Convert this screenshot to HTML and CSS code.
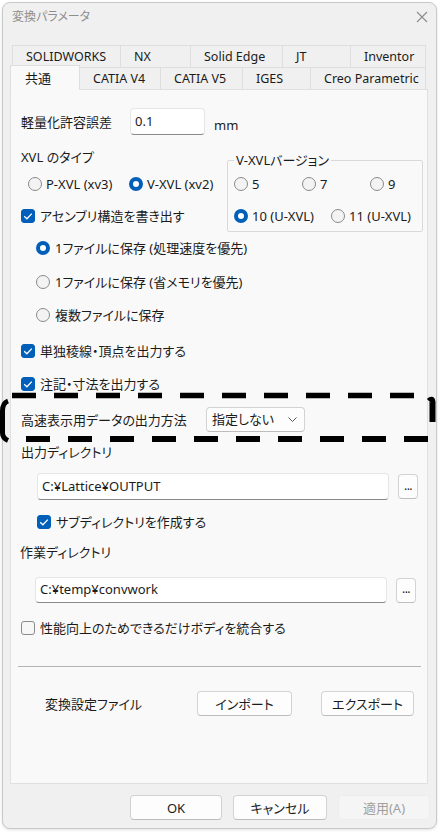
FILE: index.html
```html
<!DOCTYPE html>
<html lang="ja">
<head>
<meta charset="utf-8">
<link rel="stylesheet" href="styles.css">
</head>
<body>
<div class="window">
  <div class="titlebar">
    <span class="title">変換パラメータ</span>
    <svg class="close" viewBox="0 0 12 12"><path d="M1 1 L11 11 M11 1 L1 11" stroke="#8c8c8c" stroke-width="1.1" fill="none"/></svg>
  </div>
  <div class="tabs">
    <div class="tabrow back">
      <div class="tab w108">SOLIDWORKS</div>
      <div class="tab w70">NX</div>
      <div class="tab w92">Solid Edge</div>
      <div class="tab w68">JT</div>
      <div class="tab w76 last">Inventor</div>
    </div>
    <div class="tabrow front">
      <div class="tab w70 active">共通</div>
      <div class="tab w80">CATIA V4</div>
      <div class="tab w82">CATIA V5</div>
      <div class="tab w68">IGES</div>
      <div class="tab w116 last">Creo Parametric</div>
    </div>
  </div>
  <div class="panel">
    <div class="row r-tol">
      <span class="lbl-tol">軽量化許容誤差</span>
      <div class="tb tol"><span>0.1</span></div>
      <span class="unit">mm</span>
    </div>

    <div class="xvl">
      <div class="xvl-left">
        <div class="row h20">XVL のタイプ</div>
        <div class="row h20 types">
          <label class="opt-item w101"><span class="rd"></span><span>P-XVL (xv3)</span></label>
          <label class="opt-item"><span class="rd on"></span><span>V-XVL (xv2)</span></label>
        </div>
        <div class="row h20 mt12">
          <label class="chk"><span class="cb on"><svg viewBox="0 0 14 14"><path d="M3.2 7.2 L5.9 9.8 L10.8 4.6" stroke="#fff" stroke-width="1.3" fill="none"/></svg></span><span>アセンブリ構造を書き出す</span></label>
        </div>
      </div>
      <fieldset class="ver">
        <legend>V-XVLバージョン</legend>
        <div class="vgrid">
          <label class="opt-item"><span class="rd"></span><span>5</span></label>
          <label class="opt-item"><span class="rd"></span><span>7</span></label>
          <label class="opt-item"><span class="rd"></span><span>9</span></label>
        </div>
        <div class="vrow2">
          <label class="opt-item w97"><span class="rd on"></span><span>10 (U-XVL)</span></label>
          <label class="opt-item"><span class="rd"></span><span>11 (U-XVL)</span></label>
        </div>
      </fieldset>
    </div>

    <div class="row h20 indent mt6">
      <label class="opt-item g5"><span class="rd on"></span><span>1ファイルに保存 (処理速度を優先)</span></label>
    </div>
    <div class="row h20 indent mt14">
      <label class="opt-item g5"><span class="rd"></span><span>1ファイルに保存 (省メモリを優先)</span></label>
    </div>
    <div class="row h20 indent mt13">
      <label class="opt-item g5"><span class="rd"></span><span>複数ファイルに保存</span></label>
    </div>

    <div class="row h20 mt16">
      <label class="chk"><span class="cb on"><svg viewBox="0 0 14 14"><path d="M3.2 7.2 L5.9 9.8 L10.8 4.6" stroke="#fff" stroke-width="1.3" fill="none"/></svg></span><span>単独稜線・頂点を出力する</span></label>
    </div>
    <div class="row h20 mt13">
      <label class="chk"><span class="cb on"><svg viewBox="0 0 14 14"><path d="M3.2 7.2 L5.9 9.8 L10.8 4.6" stroke="#fff" stroke-width="1.3" fill="none"/></svg></span><span>注記・寸法を出力する</span></label>
    </div>

    <div class="row r-sel">
      <span class="lbl-sel">高速表示用データの出力方法</span>
      <div class="select"><span>指定しない</span><svg viewBox="0 0 9 5" class="chev"><path d="M0.5 0.5 L4.5 4.5 L8.5 0.5" stroke="#555" stroke-width="1" fill="none"/></svg></div>
    </div>

    <div class="row h20 mt10">出力ディレクトリ</div>
    <div class="row r-dir dir1">
      <div class="tb path"><span>C:¥Lattice¥OUTPUT</span></div>
      <div class="btn dots">...</div>
    </div>
    <div class="row h20 mt12 indent16">
      <label class="chk"><span class="cb on"><svg viewBox="0 0 14 14"><path d="M3.2 7.2 L5.9 9.8 L10.8 4.6" stroke="#fff" stroke-width="1.3" fill="none"/></svg></span><span>サブディレクトリを作成する</span></label>
    </div>

    <div class="row h20 mt10 lbl-work">作業ディレクトリ</div>
    <div class="row r-dir dir2">
      <div class="tb path"><span>C:¥temp¥convwork</span></div>
      <div class="btn dots">...</div>
    </div>
    <div class="row h20 mt15">
      <label class="chk"><span class="cb"></span><span>性能向上のためできるだけボディを統合する</span></label>
    </div>

    <div class="sep"></div>

    <div class="row r-imp">
      <span class="lbl-imp">変換設定ファイル</span>
      <div class="btn w95">インポート</div>
      <div class="btn w93">エクスポート</div>
    </div>
  </div>
  <div class="footer">
    <div class="btn w92">OK</div>
    <div class="btn w94">キャンセル</div>
    <div class="btn w92 disabled">適用(A)</div>
  </div>
</div>
<svg class="annot" viewBox="0 0 440 832" width="440" height="832">
  <line x1="12" y1="395.5" x2="414" y2="395.5" stroke="#000" stroke-width="5.5" stroke-dasharray="24 18"/>
  <line x1="26" y1="439" x2="428" y2="439" stroke="#000" stroke-width="6" stroke-dasharray="24 18"/>
  <path d="M8 401 Q2.5 403 2.5 411 L2.5 433 Q2.5 438 8 440.5" stroke="#000" stroke-width="5" fill="none"/>
  <path d="M429 401 Q432 398 432.5 402 L432.5 422" stroke="#000" stroke-width="6" fill="none"/>
</svg>
</body>
</html>
```

FILE: styles.css
```css
html, body {
  margin: 0;
  padding: 0;
}
body {
  background: #ffffff;
  font-family: "Noto Sans", "Noto Sans CJK JP", sans-serif;
  font-size: 13px;
  line-height: 16px;
  color: #1b1b1b;
  font-feature-settings: "palt" 1;
  position: relative;
  width: 440px;
  height: 832px;
  overflow: hidden;
}
.window {
  margin: 2px 0 0 2px;
  width: 435px;
  height: 827px;
  box-sizing: border-box;
  border: 1px solid #c9c9c9;
  border-radius: 8px;
  background: #f0f0f0;
  display: flex;
  flex-direction: column;
  box-shadow: 0 1px 3px rgba(0, 0, 0, 0.12);
}
.titlebar {
  height: 28px;
  flex: none;
  display: flex;
  align-items: center;
  justify-content: space-between;
  padding: 0 8px 0 9px;
}
.title {
  font-size: 12px;
  color: #8e8e8e;
}
.close {
  width: 12px;
  height: 12px;
}

/* tabs */
.tabs {
  margin: 14px 0 0 7px;
  flex: none;
}
.tabrow {
  display: flex;
  height: 22px;
}
.tabrow.back {
  margin-left: 2px;
}
.tab {
  box-sizing: border-box;
  height: 22px;
  border-top: 1px solid #dedede;
  border-left: 1px solid #dedede;
  padding-left: 13px;
  line-height: 21px;
  font-size: 12.5px;
  background: #f0f0f0;
  white-space: nowrap;
  flex: none;
}
.tab.last {
  border-right: 1px solid #dedede;
}
.tab.active {
  height: 25px;
  margin-top: -2px;
  background: #f9f9f9;
  border-right: 1px solid #dedede;
  position: relative;
  z-index: 1;
  line-height: 24px;
  padding-left: 14px;
  font-size: 13px;
}
.tab.active + .tab {
  border-left: none;
}
.w68 { width: 68px; }
.w70 { width: 70px; }
.w76 { width: 76px; }
.w80 { width: 80px; }
.w82 { width: 82px; }
.w92 { width: 92px; }
.w93 { width: 93px; }
.w94 { width: 94px; }
.w95 { width: 95px; }
.w108 { width: 108px; }
.w116 { width: 116px; }

/* panel */
.panel {
  margin-left: 7px;
  width: 418px;
  height: 695px;
  box-sizing: border-box;
  border: 1px solid #e0e0e0;
  background: #f9f9f9;
  padding: 18px 0 0 10px;
  flex: none;
}
.row {
  display: flex;
  align-items: center;
}
.h20 { height: 20px; }
.mt6 { margin-top: 6px; }
.mt10 { margin-top: 10px; }
.mt12 { margin-top: 12px; }
.mt13 { margin-top: 13px; }
.mt14 { margin-top: 14px; }
.mt15 { margin-top: 15px; }
.mt16 { margin-top: 16px; }
.indent { padding-left: 15px; }
.indent16 { padding-left: 16px; }

.r-tol {
  height: 27px;
}
.lbl-tol {
  width: 109px;
  flex: none;
}
.tb {
  box-sizing: border-box;
  background: #ffffff;
  border: 1px solid #e6e6e6;
  border-bottom: 1px solid #8a8a8a;
  border-radius: 4px;
  padding: 0 0 2px 4px;
  display: flex;
  align-items: center;
  flex: none;
}
.tol {
  width: 75px;
  height: 27px;
}
.unit {
  align-self: flex-end;
  margin: 0 0 2px 9px;
}

/* xvl block */
.xvl {
  display: flex;
  margin-top: 12px;
}
.xvl-left {
  width: 206px;
  flex: none;
}
.types {
  margin-top: 7px;
  padding-left: 7px;
}
.opt-item {
  display: flex;
  align-items: center;
  gap: 4px;
  white-space: nowrap;
}
.opt-item.g5 { gap: 5px; }
.w101 { width: 101px; flex: none; }
.w97 { width: 97px; flex: none; }
.rd {
  width: 14px;
  height: 14px;
  box-sizing: border-box;
  border-radius: 50%;
  border: 1px solid #8a8a8a;
  background: #f3f3f3;
  flex: none;
}
.rd.on {
  border: 4px solid #005fb8;
  background: #ffffff;
}
.chk {
  display: flex;
  align-items: center;
  gap: 5px;
  white-space: nowrap;
}
.cb {
  width: 14px;
  height: 14px;
  box-sizing: border-box;
  border-radius: 3px;
  border: 1px solid #8a8a8a;
  background: #f7f7f7;
  flex: none;
  display: flex;
}
.cb.on {
  background: #005fb8;
  border-color: #005fb8;
}
.cb svg {
  width: 14px;
  height: 14px;
  margin: -1px;
}
fieldset.ver {
  margin: 6px 0 0 0;
  width: 196px;
  box-sizing: border-box;
  border: 1px solid #d9d9d9;
  border-radius: 2px;
  padding: 0 0 5px 6px;
  min-inline-size: 0;
}
fieldset.ver legend {
  padding: 0 2px;
  line-height: 14px;
}
.vgrid {
  display: grid;
  grid-template-columns: 68px 68px auto;
  height: 20px;
  align-items: center;
  margin-top: 7px;
}
.vrow2 {
  display: flex;
  align-items: center;
  height: 20px;
  margin-top: 12px;
}

/* select */
.r-sel {
  margin-top: 13px;
  height: 25px;
}
.lbl-sel {
  width: 185px;
  flex: none;
}
.select {
  box-sizing: border-box;
  width: 99px;
  height: 25px;
  border: 1px solid #d3d3d3;
  border-bottom-color: #bdbdbd;
  border-radius: 4px;
  background: #fdfdfd;
  display: flex;
  align-items: center;
  justify-content: space-between;
  padding: 0 7px 1px 5px;
}
.chev {
  width: 9px;
  height: 5px;
}

/* directories */
.r-dir {
  height: 27px;
  margin-top: 11px;
}
.dir1 {
  padding-left: 16px;
}
.dir2 {
  margin-top: 15px;
  height: 26px;
  padding-left: 14px;
}
.path {
  width: 352px;
  height: 100%;
}
.dots {
  width: 20px;
  height: 100%;
  margin-left: 9px;
  font-size: 12px;
  letter-spacing: -0.5px;
  padding-bottom: 2px;
}
.lbl-work {
  margin-left: -1px;
}

.sep {
  margin: 28px 0 0 -3px;
  width: 403px;
  height: 1px;
  background: #b4b4b4;
}

.r-imp {
  margin-top: 24px;
  height: 25px;
}
.lbl-imp {
  margin-left: 24px;
  width: 152px;
  flex: none;
}
.r-imp .w93 {
  margin-left: 29px;
}

/* buttons */
.btn {
  box-sizing: border-box;
  height: 25px;
  border: 1px solid #d3d3d3;
  border-bottom-color: #bdbdbd;
  border-radius: 4px;
  background: #fdfdfd;
  display: flex;
  align-items: center;
  justify-content: center;
  flex: none;
}
.footer {
  margin-top: 11px;
  display: flex;
  justify-content: flex-end;
  gap: 11px;
  padding-right: 6px;
}
.btn.disabled {
  background: #f5f5f5;
  border-color: #ededed;
  color: #a0a0a0;
}

.annot {
  position: absolute;
  left: 0;
  top: 0;
  width: 440px;
  height: 832px;
  pointer-events: none;
}
```
